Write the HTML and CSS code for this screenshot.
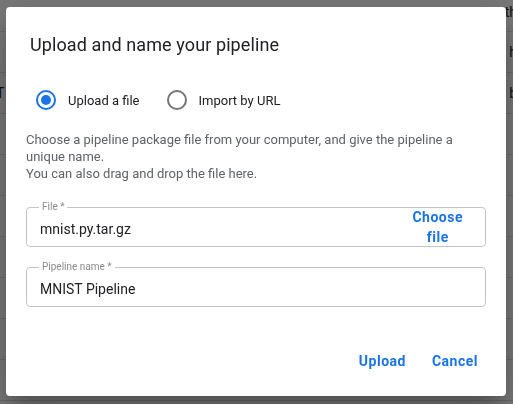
FILE: index.html
```html
<!DOCTYPE html>
<html>
<head>
<meta charset="utf-8">
<link rel="stylesheet" href="styles.css">
</head>
<body>
<div class="page">
  <div class="row first"><span class="cell-l link">:</span><span class="cell-r">th</span></div>
  <div class="row"><span class="cell-l link">:</span><span class="cell-r">h</span></div>
  <div class="row"><span class="cell-l">T</span><span class="cell-r">b</span></div>
  <div class="row"><span class="cell-l"></span><span class="cell-r"></span></div>
  <div class="row"><span class="cell-l"></span><span class="cell-r"></span></div>
  <div class="row"><span class="cell-l"></span><span class="cell-r"></span></div>
  <div class="row"><span class="cell-l"></span><span class="cell-r"></span></div>
  <div class="row"><span class="cell-l"></span><span class="cell-r"></span></div>
  <div class="row"><span class="cell-l"></span><span class="cell-r"></span></div>
  <div class="row"><span class="cell-l"></span><span class="cell-r"></span></div>
</div>
<div class="scrim"></div>
<div class="dialog">
  <h2 class="title">Upload and name your pipeline</h2>
  <div class="radios">
    <label class="radio"><span class="dot on"></span><span>Upload a file</span></label>
    <label class="radio"><span class="dot"></span><span>Import by URL</span></label>
  </div>
  <p class="desc">Choose a pipeline package file from your computer, and give the pipeline a unique name.<br>You can also drag and drop the file here.</p>
  <fieldset class="field file">
    <legend>File *</legend>
    <div class="inner">
      <div class="value">mnist.py.tar.gz</div>
      <button class="choose">Choose<br>file</button>
    </div>
  </fieldset>
  <fieldset class="field name">
    <legend>Pipeline name *</legend>
    <div class="inner">
      <div class="value">MNIST Pipeline</div>
    </div>
  </fieldset>
  <div class="actions">
    <button class="btn">Upload</button>
    <button class="btn">Cancel</button>
  </div>
</div>
</body>
</html>
```
FILE: styles.css
```css
html, body { margin: 0; padding: 0; }
body {
  width: 513px; height: 404px; overflow: hidden;
  font-family: Roboto, "Noto Sans", Arial, sans-serif;
  background: #fff;
}
.page { display: flex; flex-direction: column; }
.row {
  height: 40px; border-bottom: 1px solid #e0e0e0;
  display: flex; justify-content: space-between; align-items: center;
  font-size: 14px; color: #202124;
}
.row.first { height: 32px; align-items: flex-start; padding-top: 4px; box-sizing: border-box; }
.cell-l { margin-left: -4px; }
.cell-r { margin-right: -4px; }
.link { color: #1a73e8; }
.scrim { position: fixed; inset: 0; background: rgba(0,0,0,0.53); }
.dialog {
  position: fixed; left: 6px; top: 7px; width: 500px; height: 389px;
  background: #fff; border-radius: 4px; box-sizing: border-box;
  box-shadow: 0 11px 15px -7px rgba(0,0,0,.2), 0 24px 38px 3px rgba(0,0,0,.14), 0 9px 46px 8px rgba(0,0,0,.12);
  padding: 0 20px 0 20px;
  display: flex; flex-direction: column;
}
.title {
  margin: 26px 0 0 4px; font-size: 18px; font-weight: 400; color: #202124;
  line-height: 24px; letter-spacing: 0.1px;
}
.radios { display: flex; gap: 27px; margin: 33px 0 0 10px; }
.radio { display: flex; align-items: center; gap: 12px; font-size: 13px; color: #202124; }
.dot {
  width: 16px; height: 16px; border-radius: 50%; border: 2px solid #757575;
  box-sizing: content-box; position: relative;
}
.dot.on { border-color: #1a73e8; }
.dot.on::after {
  content: ""; position: absolute; left: 3px; top: 3px; width: 10px; height: 10px;
  border-radius: 50%; background: #1a73e8;
}
.desc {
  margin: 21px 0 0 0; font-size: 13px; line-height: 17px; color: #5f6368;
}
.field {
  margin: 0; border: 1px solid #c4c4c4; border-radius: 4px;
  padding: 0 10px 0 13px; min-width: 0;
}
.field legend {
  font-size: 10px; color: #8a8a8a; padding: 0 3px; margin-left: -1px; line-height: 10px;
}
.inner { height: 34px; display: flex; align-items: center; justify-content: space-between; }
.file { margin-top: 20px; }
.name { margin-top: 15px; }
.value { font-size: 14px; color: #202124; }
.choose {
  border: 0; background: none; padding: 0; margin: -4px 12px 0 0;
  font-family: inherit; font-size: 14px; font-weight: 700; color: #1a73e8; line-height: 20px;
  letter-spacing: 0.5px;
}
.actions { display: flex; justify-content: flex-end; gap: 26px; margin-top: 46px; padding-right: 8px; }
.btn {
  border: 0; background: none; padding: 0; font-family: inherit;
  font-size: 14px; font-weight: 700; color: #1a73e8; letter-spacing: 0.5px;
}
```
